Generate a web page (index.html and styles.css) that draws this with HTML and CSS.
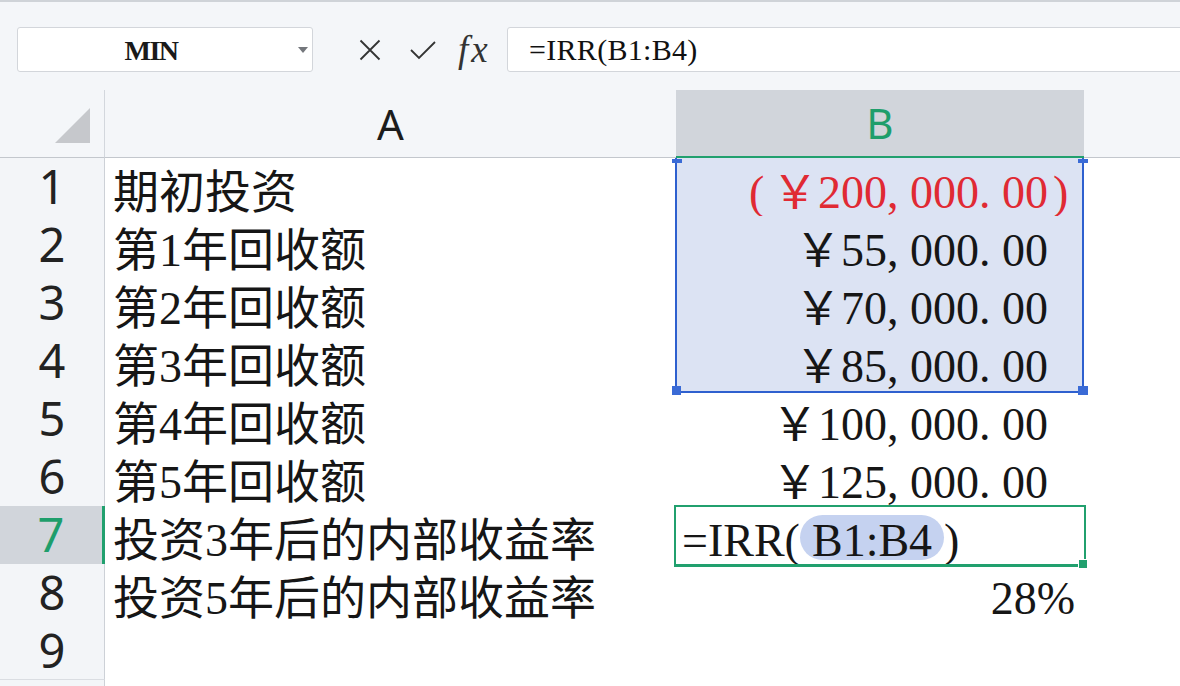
FILE: index.html
```html
<!DOCTYPE html>
<html lang="zh-CN">
<head>
<meta charset="utf-8">
<title>IRR</title>
<link rel="stylesheet" href="styles.css">
</head>
<body>
<div class="toolbar">
  <div class="namebox">
    <span class="name">MIN</span>
    <span class="drop"><svg width="10" height="6" viewBox="0 0 10 6"><path d="M0 0H10L5 6Z" fill="#74777c"/></svg></span>
  </div>
  <span class="icon cancel"><svg width="22" height="22" viewBox="0 0 22 22"><path d="M1.5 1.5L20.5 20.5M20.5 1.5L1.5 20.5" stroke="#333" stroke-width="1.8" fill="none"/></svg></span>
  <span class="icon enter"><svg width="26" height="20" viewBox="0 0 26 20"><path d="M1 10L9 18L25 2" stroke="#333" stroke-width="1.8" fill="none"/></svg></span>
  <span class="fx">fx</span>
  <div class="formula">=IRR(B1:B4)</div>
</div>
<div class="sheet">
  <div class="row head">
    <div class="corner"><svg width="35" height="35" viewBox="0 0 35 35"><path d="M35 0V35H0Z" fill="#c6c8cc"/></svg></div>
    <div class="ch">A</div>
    <div class="ch on">B</div>
    <div class="ch"></div>
  </div>
  <div class="row">
    <div class="rn">1</div>
    <div class="ca">期初投资</div>
    <div class="cb sel neg"><span class="pu">(</span>￥200<span class="pu">,</span>000<span class="pu">.</span>00<span class="tr">)</span></div>
    <div class="cc"></div>
  </div>
  <div class="row">
    <div class="rn">2</div>
    <div class="ca">第1年回收额</div>
    <div class="cb sel">￥55<span class="pu">,</span>000<span class="pu">.</span>00<span class="tr"></span></div>
    <div class="cc"></div>
  </div>
  <div class="row">
    <div class="rn">3</div>
    <div class="ca">第2年回收额</div>
    <div class="cb sel">￥70<span class="pu">,</span>000<span class="pu">.</span>00<span class="tr"></span></div>
    <div class="cc"></div>
  </div>
  <div class="row">
    <div class="rn">4</div>
    <div class="ca">第3年回收额</div>
    <div class="cb sel">￥85<span class="pu">,</span>000<span class="pu">.</span>00<span class="tr"></span></div>
    <div class="cc"></div>
  </div>
  <div class="row">
    <div class="rn">5</div>
    <div class="ca">第4年回收额</div>
    <div class="cb">￥100<span class="pu">,</span>000<span class="pu">.</span>00<span class="tr"></span></div>
    <div class="cc"></div>
  </div>
  <div class="row">
    <div class="rn">6</div>
    <div class="ca">第5年回收额</div>
    <div class="cb">￥125<span class="pu">,</span>000<span class="pu">.</span>00<span class="tr"></span></div>
    <div class="cc"></div>
  </div>
  <div class="row">
    <div class="rn cur">7</div>
    <div class="ca">投资3年后的内部收益率</div>
    <div class="cb fm">=IRR(<span class="pill">B1:B4</span>)</div>
    <div class="cc"></div>
  </div>
  <div class="row">
    <div class="rn">8</div>
    <div class="ca">投资5年后的内部收益率</div>
    <div class="cb">28%</div>
    <div class="cc"></div>
  </div>
  <div class="row">
    <div class="rn">9</div>
    <div class="ca"></div>
    <div class="cb"></div>
    <div class="cc"></div>
  </div>
  <div class="row tail">
    <div class="rn"></div>
    <div class="ca"></div>
    <div class="cb"></div>
    <div class="cc"></div>
  </div>

  <div class="range"></div>
  <div class="hd tl"></div>
  <div class="hd tr"></div>
  <div class="hd bl"></div>
  <div class="hd br"></div>
  <div class="active"><span class="fh"></span></div>
</div>
</body>
</html>
```

FILE: styles.css
```css
* { box-sizing: border-box; }
html, body { margin: 0; padding: 0; }
body {
  width: 1180px;
  height: 686px;
  overflow: hidden;
  background: #ffffff;
  color: #161616;
}

/* formula toolbar */
.toolbar {
  height: 90px;
  background: #f4f6f9;
  border-top: 2px solid #cfd3d8;
  display: flex;
  align-items: center;
  padding-top: 7px;
  padding-left: 17px;
}
.namebox {
  width: 296px;
  height: 45px;
  background: #ffffff;
  border: 1px solid #d3d6db;
  border-radius: 3px;
  display: flex;
  align-items: center;
}
.name {
  width: 266px;
  text-align: center;
  font-family: "Liberation Serif", serif;
  font-size: 28px;
  font-weight: 600;
  letter-spacing: -1.5px;
  padding-top: 3px;
  color: #1a1a1a;
}
.drop {
  flex: 1;
  display: flex;
  justify-content: flex-end;
  padding-right: 4px;
}
.icon { display: flex; }
.cancel { margin-left: 46px; }
.enter { margin-left: 29px; }
.fx {
  width: 32px;
  margin-left: 22px;
  font-family: "Liberation Serif", serif;
  font-style: italic;
  font-size: 37px;
  letter-spacing: 3px;
  color: #333;
  line-height: 40px;
}
.formula {
  flex: 1;
  margin-left: 17px;
  margin-right: -6px;
  height: 45px;
  background: #ffffff;
  border: 1px solid #d3d6db;
  border-radius: 3px;
  padding-left: 21px;
  font-family: "Liberation Serif", serif;
  font-size: 30px;
  letter-spacing: 0.3px;
  line-height: 43px;
  color: #111;
}

/* sheet */
.sheet { position: relative; }
.row {
  display: grid;
  grid-template-columns: 105px 571px 408px 1fr;
  height: 58px;
}
.row.tail { height: 6px; overflow: hidden; }
.head {
  height: 68px;
  background: #f4f6f9;
}
.corner {
  border-right: 1px solid #d3d7dd;
  border-bottom: 1px solid #c3c7cd;
  display: flex;
  justify-content: flex-end;
  align-items: flex-start;
  padding: 18px 14px 0 0;
}
.ch {
  border-bottom: 1px solid #c3c7cd;
  font-family: "Noto Sans", sans-serif;
  font-size: 42px;
  line-height: 67px;
  text-align: center;
  color: #1c1c1c;
}
.ch.on {
  background: #d1d5db;
  color: #1e9e6b;
  border-bottom: 2px solid #21a06e;
  line-height: 66px;
}
.rn {
  background: #f3f5f8;
  border-right: 1px solid #cdd1d7;
  border-bottom: 1px solid #dadde2;
  font-family: "Noto Sans", sans-serif;
  font-size: 47px;
  line-height: 57px;
  text-align: center;
  color: #222;
}
.tail .rn { border-bottom: 0; }
.rn.cur {
  background: #d1d5db;
  color: #1e9e6b;
  border-right: 3px solid #21a06e;
}
.ca, .cb {
  font-family: "Liberation Serif", "Noto Sans CJK SC", serif;
  font-size: 46px;
  line-height: 51px;
  padding-top: 9px;
  white-space: nowrap;
}
.tail .ca, .tail .cb { padding-top: 0; }
.ca { padding-left: 8px; }
.cb {
  text-align: right;
  padding-right: 9px;
}
.cb.sel { background: #dce3f3; }
.neg { color: #e02a33; }
.pu {
  display: inline-block;
  width: 0.5em;
  text-align: left;
}
.tr {
  display: inline-block;
  width: 27px;
  text-align: left;
  padding-left: 5px;
}
.cb.fm {
  text-align: left;
  padding-left: 6px;
}
.pill {
  display: inline-block;
  height: 45px;
  line-height: 52px;
  padding: 0 12px;
  border-radius: 23px;
  background: #c5d2f0;
  vertical-align: baseline;
}

/* selection overlays */
.range {
  position: absolute;
  left: 675px;
  top: 68px;
  width: 409px;
  height: 235px;
  border: 2px solid #2e60cf;
  border-top: 0;
  pointer-events: none;
}
.hd {
  position: absolute;
  background: #3a6bd6;
}
.hd.tl { left: 672px; top: 69px; width: 10px; height: 4px; }
.hd.tr { left: 1078px; top: 69px; width: 10px; height: 4px; }
.hd.bl { left: 672px; top: 296px; width: 9px; height: 9px; }
.hd.br { left: 1078px; top: 296px; width: 10px; height: 9px; }
.active {
  position: absolute;
  left: 674px;
  top: 415px;
  width: 412px;
  height: 62px;
  border: 2px solid #21a06e;
  border-bottom-width: 3px;
  pointer-events: none;
}
.fh {
  position: absolute;
  right: -3px;
  bottom: -4px;
  width: 9px;
  height: 9px;
  background: #21a06e;
  border-left: 1px solid #ffffff;
  border-top: 1px solid #ffffff;
}
```
